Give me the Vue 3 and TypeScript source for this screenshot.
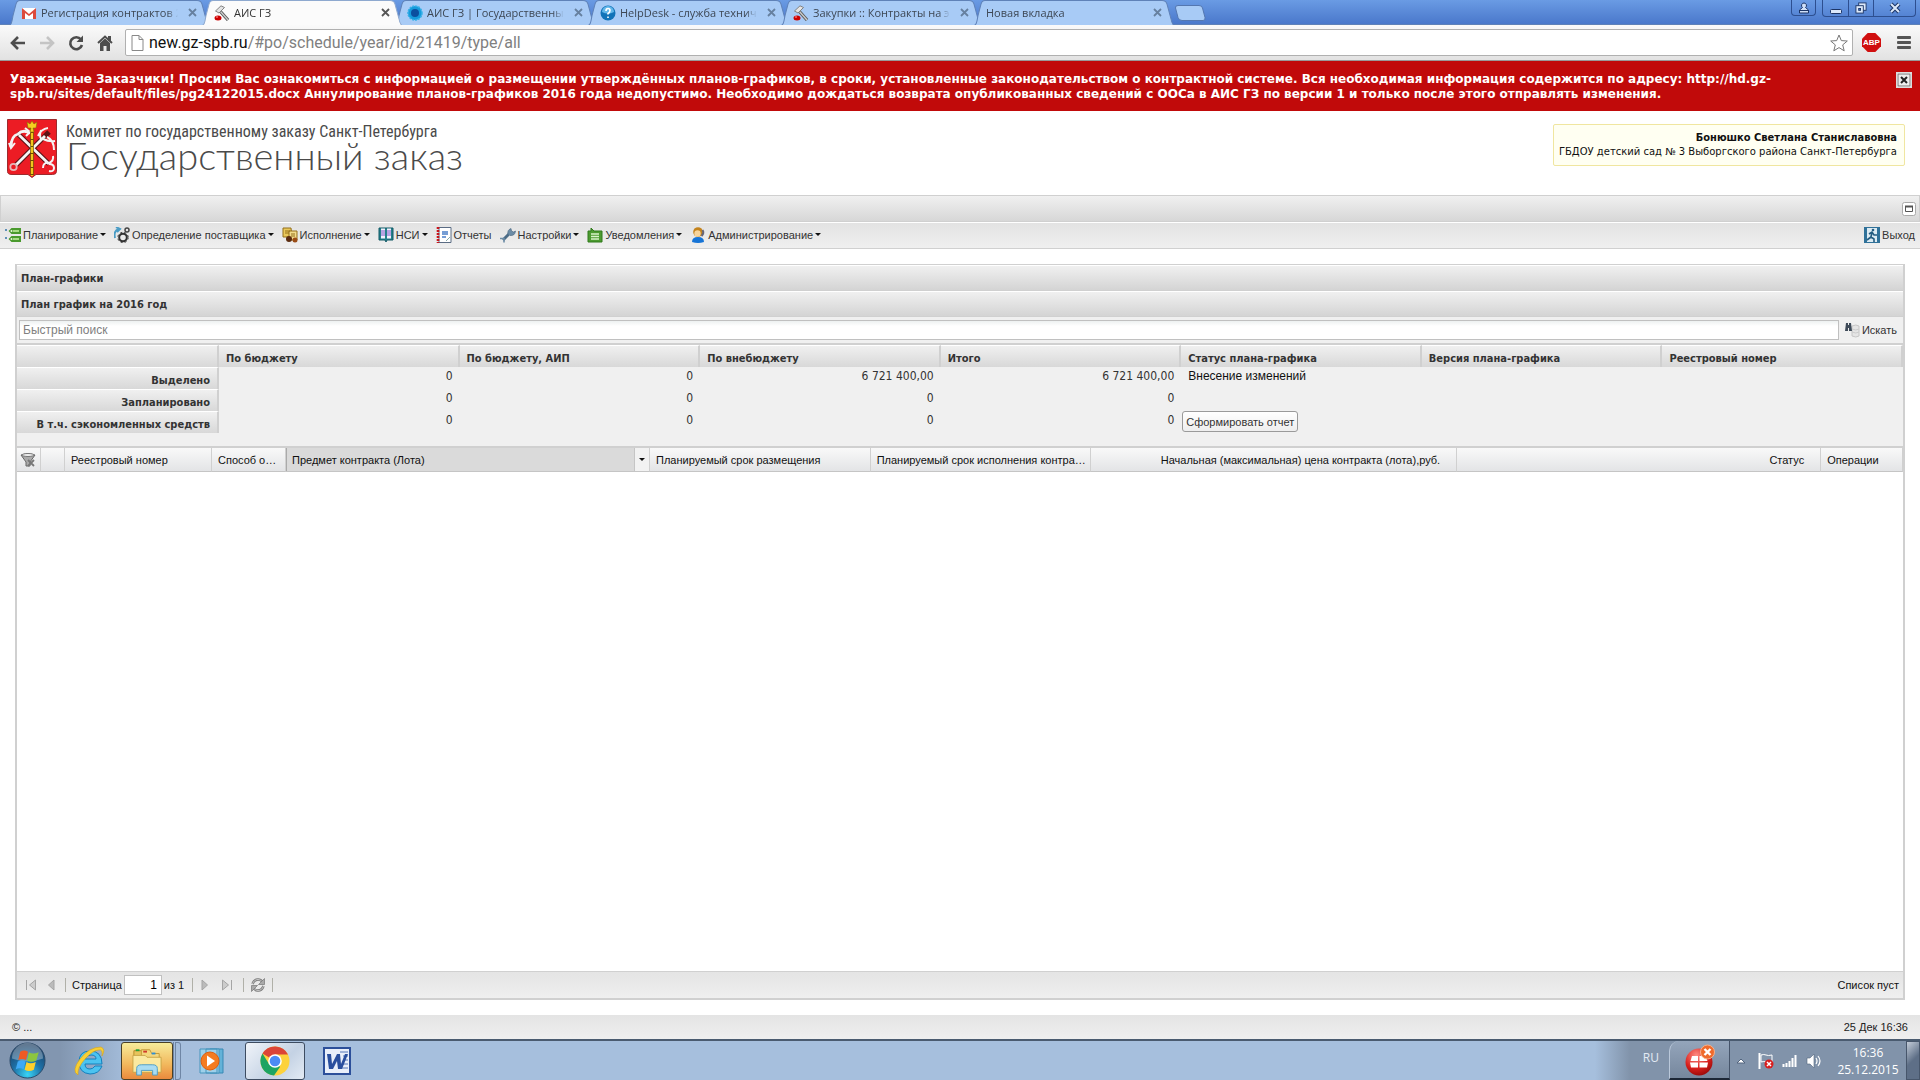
<script setup lang="ts">
import { ref } from 'vue'

interface Tab { title: string; icon: string; active?: boolean }
interface MenuItem { label: string; icon: string; arrow: boolean }
interface Column { label: string; cls: string }

const tabs: Tab[] = [
  { title: 'Регистрация контрактов 2', icon: 'gmail' },
  { title: 'АИС ГЗ', icon: 'gavel', active: true },
  { title: 'АИС ГЗ | Государственны', icon: 'flower' },
  { title: 'HelpDesk - служба технич', icon: 'help' },
  { title: 'Закупки :: Контракты на э', icon: 'gavel' },
  { title: 'Новая вкладка', icon: '' },
]

const menu: MenuItem[] = [
  { label: 'Планирование', icon: 'plan', arrow: true },
  { label: 'Определение поставщика', icon: 'gears', arrow: true },
  { label: 'Исполнение', icon: 'exec', arrow: true },
  { label: 'НСИ', icon: 'book', arrow: true },
  { label: 'Отчеты', icon: 'report', arrow: false },
  { label: 'Настройки', icon: 'wrench', arrow: true },
  { label: 'Уведомления', icon: 'notice', arrow: true },
  { label: 'Администрирование', icon: 'admin', arrow: true },
]

const summaryHeads = ['По бюджету', 'По бюджету, АИП', 'По внебюджету', 'Итого', 'Статус плана-графика', 'Версия плана-графика', 'Реестровый номер']
const summaryRows = [
  { label: 'Выделено', values: ['0', '0', '6 721 400,00', '6 721 400,00'] },
  { label: 'Запланировано', values: ['0', '0', '0', '0'] },
  { label: 'В т.ч. сэкономленных средств', values: ['0', '0', '0', '0'] },
]

const columns: Column[] = [
  { label: '', cls: 'c-filter' },
  { label: '', cls: 'c-blank' },
  { label: 'Реестровый номер', cls: 'c-reg' },
  { label: 'Способ определения', cls: 'c-way' },
  { label: 'Предмет контракта (Лота)', cls: 'c-subject' },
  { label: 'Планируемый срок размещения', cls: 'c-term' },
  { label: 'Планируемый срок исполнения контракта', cls: 'c-term' },
  { label: 'Начальная (максимальная) цена контракта (лота),руб.', cls: 'c-price' },
  { label: 'Статус', cls: 'c-status' },
  { label: 'Операции', cls: 'c-ops' },
]

const address = ref('new.gz-spb.ru/#po/schedule/year/id/21419/type/all')
const query = ref('')
const page = ref('1')
const bannerOpen = ref(true)
</script>

<template>
  <div class="screen">
    <header class="tabbar">
      <ul class="tabs">
        <li v-for="tab in tabs" :key="tab.title" class="tab" :class="{ active: tab.active }">
          <svg class="tab-shape" viewBox="0 0 202 24" preserveAspectRatio="none" aria-hidden="true">
            <path d="M0 25 C4 24 4 20 5 15 L8 4 Q9 .5 12 .5 H189 Q193 .5 194 4 L198 18 Q199 24 202 25 Z" :fill="tab.active ? '#fbfbfb' : '#a8cbf6'" :stroke="tab.active ? '#8ea9cf' : '#5f82b8'" />
          </svg>
          <svg v-if="tab.icon === 'gmail'" class="fav" viewBox="0 0 16 16"><path d="M1 3h14v11H1z" fill="#fff" /><path d="M1 14V3l7 6 7-6v11h-3V8l-4 3-4-3v6z" fill="#dc4a3d" /></svg>
          <svg v-else-if="tab.icon === 'gavel'" class="fav" viewBox="0 0 16 16"><path d="M6 6l8 9" stroke="#555" stroke-width="3.200" /><path d="M6 6l8 9" stroke="#ccc" stroke-width="1.400" /><path d="M1.500 6L7 .8l3.500 1.700L5 8z" fill="#e4e4e4" stroke="#777" stroke-width=".9" /><ellipse cx="4" cy="13" rx="3.500" ry="2.500" fill="#c00" /><ellipse cx="3" cy="12" rx="1.200" ry=".7" fill="#f88" /></svg>
          <svg v-else-if="tab.icon === 'flower'" class="fav" viewBox="0 0 16 16"><circle cx="8" cy="8" r="7" fill="#159bdc" stroke="#34b0e8" stroke-width="1.500" stroke-dasharray="2 1" /><circle cx="8" cy="8" r="4" fill="#0b4f9f" /></svg>
          <svg v-else-if="tab.icon === 'help'" class="fav" viewBox="0 0 16 16"><circle cx="8" cy="8" r="7.500" fill="#1173b8" /><path d="M2 7a6 6 0 0 1 12 0q-6 3-12 0z" fill="#62b7ea" /><path d="M6 6q0-2.500 2-2.500t2 2-2 3v1M8 11.500v1.500" fill="none" stroke="#fff" stroke-width="1.600" /></svg>
          <span class="tab-title">{{ tab.title }}</span>
          <button class="tab-close" aria-label="Закрыть вкладку"><svg viewBox="0 0 9 9"><path d="M1 1l7 7M8 1l-7 7" stroke="currentColor" stroke-width="1.800" /></svg></button>
        </li>
      </ul>
      <button class="new-tab" aria-label="Новая вкладка"><svg viewBox="0 0 32 16"><path d="M1.500 3Q1 .5 4 .5H25q3 0 3.500 2.500l2.500 9.500q.5 3-2 3H8q-3 0-4-3z" fill="#a8cbf6" stroke="#5477b0" /></svg></button>
      <div class="win">
        <button class="win-user" aria-label="Профиль"><svg viewBox="0 0 12 12"><path d="M6 1a2.500 2.500 0 0 1 1.500 4.500L10.500 8v3h-9V8l3-2.500A2.500 2.500 0 0 1 6 1z" fill="#cfe0f8" stroke="#1c3566" /><path d="M1.500 8.500h9" stroke="#1c3566" /></svg></button>
        <div class="win-group">
          <button aria-label="Свернуть"><svg viewBox="0 0 12 12"><rect x=".5" y="7.500" width="11" height="4" rx="1" fill="#dbe8fa" stroke="#1c3566" /></svg></button>
          <button aria-label="Восстановить"><svg viewBox="0 0 13 13"><rect x="4" y="1" width="8" height="8" fill="#dbe8fa" stroke="#1c3566" /><rect x="1" y="4" width="8" height="8" fill="#dbe8fa" stroke="#1c3566" /><rect x="4" y="7" width="2" height="2" fill="#4a78cb" stroke="#1c3566" /></svg></button>
          <button class="wide" aria-label="Закрыть"><svg viewBox="0 0 12 12"><path d="M2 2l8 8M10 2l-8 8" stroke="#1c3566" stroke-width="4" /><path d="M2 2l8 8M10 2l-8 8" stroke="#dbe8fa" stroke-width="2" /></svg></button>
        </div>
      </div>
    </header>

    <nav class="toolbar">
      <button aria-label="Назад"><svg viewBox="0 0 18 18"><path d="M16 9H4M9 3L3 9l6 6" fill="none" stroke="#4d4d4d" stroke-width="2.600" /></svg></button>
      <button aria-label="Вперед"><svg viewBox="0 0 18 18"><path d="M2 9h12M9 3l6 6-6 6" fill="none" stroke="#c4c4c4" stroke-width="2.600" /></svg></button>
      <button aria-label="Обновить"><svg viewBox="0 0 18 18"><path d="M14 5.500A6 6 0 1 0 15 11" fill="none" stroke="#4d4d4d" stroke-width="2.600" /><path d="M16 1.500V8H9.500z" fill="#4d4d4d" /></svg></button>
      <button aria-label="Домой"><svg viewBox="0 0 18 18"><path d="M2 9l7-6.500L16 9" fill="none" stroke="#4d4d4d" stroke-width="2" /><path d="M12 2h3v5h-3zM4 9l5-4.500L14 9v8h-3.500v-5h-3v5H4z" fill="#4d4d4d" /></svg></button>
      <div class="omnibox">
        <svg class="doc" viewBox="0 0 13 16"><path d="M1 .5h7l4 4v11H1z" fill="#fff" stroke="#888" /><path d="M8 .5v4h4" fill="none" stroke="#888" /></svg>
        <a class="url" :href="'#po'" :title="address"><span>new.gz-spb.ru</span>/#po/schedule/year/id/21419/type/all</a>
        <svg class="star" viewBox="0 0 18 18"><path d="M9 1l2.300 5.600 6 .4-4.600 3.900 1.500 5.900L9 13.600l-5.200 3.200 1.500-5.900L.7 7l6-.4z" fill="#fff" stroke="#777" /></svg>
      </div>
      <span class="abp"><svg viewBox="0 0 20 20"><path d="M6 0h8l6 6v8l-6 6H6l-6-6V6z" fill="#d00f0f" /></svg><b>ABP</b></span>
      <button class="burger" aria-label="Меню"><i></i><i></i><i></i></button>
    </nav>

    <section v-if="bannerOpen" class="banner">
      <p>Уважаемые Заказчики! Просим Вас ознакомиться с информацией о размещении утверждённых планов-графиков, в сроки, установленные законодательством о контрактной системе. Вся необходимая информация содержится по адресу: http://hd.gz-spb.ru/sites/default/files/pg24122015.docx Аннулирование планов-графиков 2016 года недопустимо. Необходимо дождаться возврата опубликованных сведений с ООСа в АИС ГЗ по версии 1 и только после этого отправлять изменения.</p>
      <button aria-label="Закрыть" @click="bannerOpen = false"><svg viewBox="0 0 16 16"><rect x=".5" y=".5" width="15" height="15" fill="#fff" stroke="#ddd" /><rect x="2" y="2" width="12" height="12" fill="#eee" stroke="#777" /><path d="M5 5l6 6M11 5l-6 6" stroke="#222" stroke-width="2" /></svg></button>
    </section>

    <section class="brand">
      <svg class="arms" viewBox="0 0 50 59" aria-hidden="true">
        <path d="M.5.5h49v52q0 3-4 3H29l-4 3-4-3H5q-4.500 0-4.500-3z" fill="#ec1c24" stroke="#9c2b2e" />
        <g fill="none" stroke="#5d1115" stroke-width="5"><path d="M9 46L42 13M10 14L42 45" /></g>
        <g fill="none" stroke="#f4f4f4" stroke-width="2.800">
          <path d="M9 46L38 17M12 16L42 45" /><circle cx="6.500" cy="48" r="3.200" stroke-width="1.800" stroke="#e5b7b7" />
          <path d="M4 28Q4 17 11 15Q16 10 23 14" /><path d="M2 24l2 5 4-5M18 9l5 4-4 4" stroke-width="2" />
          <path d="M31 17Q34 10 41 9M40 18Q47 21 47 31M34 20q-2-4 0-9M36 20q6 3 12 2" stroke-width="2" />
          <path d="M36 49q0-6 6-5 5-2 4-7M42 45q5 0 5 4t-5 3" stroke-width="2" />
        </g>
        <path d="M25 7v49" stroke="#6b5200" stroke-width="3.500" /><path d="M25 7v50" stroke="#f0c81c" stroke-width="2.200" stroke-dasharray="6 1" />
        <path d="M20 3l3 2 2-3 2 3 3-2-1 6h-3l1 4h-4l1-4h-3z" fill="#f5cf20" stroke="#8b6b00" stroke-width=".6" />
      </svg>
      <div class="brand-text">
        <p class="committee">Комитет по государственному заказу Санкт-Петербурга</p>
        <h1>Государственный заказ</h1>
      </div>
      <div class="user">
        <strong>Бонюшко Светлана Станиславовна</strong>
        <span>ГБДОУ детский сад № 3 Выборгского района Санкт-Петербурга</span>
      </div>
    </section>

    <div class="titlebar">
      <button aria-label="Развернуть"><svg viewBox="0 0 14 14"><rect x=".5" y=".5" width="13" height="13" rx="2" fill="#fff" stroke="#aaa" /><path d="M3.500 4.500h7v5h-7z" fill="none" stroke="#555" /><path d="M3 4.500h8" stroke="#555" stroke-width="2" /></svg></button>
    </div>

    <nav class="menubar">
      <button v-for="item in menu" :key="item.label">
        <svg viewBox="0 0 16 16" aria-hidden="true">
          <g v-if="item.icon === 'plan'"><path d="M6.500 1H16v6H6.500L3.500 4zM6.500 9H16v6H6.500l-3-3z" fill="#4a9a2e" /><path d="M8 4h6M8 12h6" stroke="#a6dc84" stroke-width="2" /><circle cx="6.500" cy="4" r="1" fill="#e8f8dd" /><circle cx="6.500" cy="12" r="1" fill="#e8f8dd" /><path d="M0 3h2M0 11h2" stroke="#3273a8" stroke-width="1.500" /></g>
          <g v-else-if="item.icon === 'gears'"><circle cx="9" cy="10.500" r="3.800" fill="none" stroke="#333" stroke-width="2" /><circle cx="9" cy="10.500" r="5.200" fill="none" stroke="#333" stroke-dasharray="2 2.200" /><circle cx="13" cy="3" r="2" fill="none" stroke="#444" stroke-width="1.500" /><path d="M1 11Q-1 4 5 2M2 0l4 2-3 3" fill="none" stroke="#4a9cc5" stroke-width="2" /></g>
          <g v-else-if="item.icon === 'exec'"><path d="M1 1h8l1 9H1z" fill="#e9c85a" stroke="#936f1b" /><path d="M7 4h8v9H7z" fill="#f2dc8c" stroke="#936f1b" /><path d="M3 4h5M3 6h4M9 7h4M9 9h4" stroke="#936f1b" /><circle cx="7" cy="12" r="3" fill="#5a2b0f" /><circle cx="13" cy="13" r="2.500" fill="#9a4c16" /></g>
          <g v-else-if="item.icon === 'book'"><path d="M1 1h14v12H9l-1 2-1-2H1z" fill="#23808c" stroke="#125a66" /><path d="M3 1.500h4v10H3zM9 1.500h4v10H9z" fill="#f3f0fc" /><path d="M3 4h4M3 6h4M3 8h4M9 4h4M9 6h4M9 8h4" stroke="#7b55c7" /></g>
          <g v-else-if="item.icon === 'report'"><path d="M3 .5h12v15H3z" fill="#fff" stroke="#5b6c84" /><path d="M2 0v16" stroke="#c8161d" stroke-width="2.600" stroke-dasharray="2 1" /><path d="M6 5h6M6 7h6M6 10h4" stroke="#4a7fc7" stroke-width="1.400" /><path d="M10 14l4-4" stroke="#8aa" /></g>
          <g v-else-if="item.icon === 'wrench'"><path d="M3 13l7-7" stroke="#4b6b86" stroke-width="3" /><path d="M8 7Q7 3 11 1.500L11.500 4l2 1L15.500 4Q15 9 10 8.500" fill="#6c8ca6" stroke="#45617a" stroke-width=".6" /><path d="M0 11.500h4v4" stroke="#6c8ca6" stroke-width="1.600" fill="none" /></g>
          <g v-else-if="item.icon === 'notice'"><path d="M1 4h3V1l3 3h8v11H1z" fill="#4c9a30" stroke="#2f7a1a" /><path d="M4 7h8M4 9.500h8M4 12h8" stroke="#d8f2c8" stroke-width="1.300" /></g>
          <g v-else><path d="M2 15q0-5 6-5t6 5q-6 2-12 0z" fill="#1674d6" /><circle cx="8" cy="5" r="4.800" fill="#c4831c" /><circle cx="7.500" cy="6.500" r="3.200" fill="#f7d49b" /><path d="M12.500 3q2 3-1 6" stroke="#667" stroke-width="2" fill="none" /></g>
        </svg>
        <span>{{ item.label }}</span><i v-if="item.arrow" class="caret"></i>
      </button>
      <button class="exit"><svg viewBox="0 0 16 16" aria-hidden="true"><path d="M0 0h16v16H0z" fill="#2f7199" /><path d="M3 1h10v14H3z" fill="#dcebf3" /><circle cx="9" cy="3" r="1.300" fill="#245c80" /><path d="M5 7l3-2 2 3h3M8 5L7 10l3 2v3M7 10l-4 3" fill="none" stroke="#245c80" stroke-width="1.600" /></svg><span>Выход</span></button>
    </nav>

    <main class="main">
      <section class="panel">
        <h2>План-графики</h2>
        <h3>План график на 2016 год</h3>
        <form class="search" @submit.prevent>
          <input v-model="query" type="text" aria-label="Быстрый поиск" placeholder="Быстрый поиск" />
          <button type="submit"><svg viewBox="0 0 16 16" aria-hidden="true"><path d="M8 4q4-2 7 0v10q-3 2-7 0z" fill="#e5e5e5" stroke="#c6c6c6" /><path d="M8 7q4 2 7 0M8 10q4 2 7 0" fill="none" stroke="#ccc" /><path d="M2 1h2v2h1V1h2l1 8H5V6H4v3H1z" fill="#3e4a58" /></svg>Искать</button>
        </form>

        <div class="summary">
          <table>
            <colgroup><col class="label-col" /><col v-for="h in summaryHeads" :key="h" /></colgroup>
            <thead><tr><td class="corner"></td><th v-for="h in summaryHeads" :key="h" scope="col">{{ h }}</th></tr></thead>
            <tbody>
              <tr v-for="(row, i) in summaryRows" :key="row.label">
                <th scope="row">{{ row.label }}</th>
                <td v-for="(v, n) in row.values" :key="n" class="num">{{ v }}</td>
                <td class="state"><template v-if="i === 0">Внесение изменений</template><button v-if="i === 2" type="button">Сформировать отчет</button></td>
                <td></td><td></td>
              </tr>
            </tbody>
          </table>
        </div>

        <div class="grid">
          <table>
            <thead><tr>
              <th v-for="c in columns" :key="c.label + c.cls" :class="c.cls" scope="col">
                <svg v-if="c.cls === 'c-filter'" viewBox="0 0 16 16"><path d="M1 3q7-3 14 0l-5 7v4H6v-4z" fill="#aaa" stroke="#666" /><ellipse cx="8" cy="3" rx="6" ry="1.500" fill="#eee" stroke="#777" /><path d="M8 8l6 6M14 8l-6 6" stroke="#777" stroke-width="1.800" /></svg>
                <div v-else-if="c.cls === 'c-subject'" class="subject"><span>{{ c.label }}</span><button aria-label="Меню столбца"><i class="caret"></i></button></div>
                <template v-else>{{ c.label }}</template>
              </th>
            </tr></thead>
          </table>
        </div>

        <div class="pager">
          <button class="back" aria-label="Первая"><svg viewBox="0 0 12 12"><path d="M1.500 1v10M10.500 1v10L4.500 6z" fill="#ccc" stroke="#a5a5a5" /></svg></button>
          <button class="back" aria-label="Предыдущая"><svg viewBox="0 0 12 12"><path d="M9 1v10L3.500 6z" fill="#bbb" stroke="#a5a5a5" /></svg></button>
          <i class="sep"></i>
          <label for="page">Страница</label><input id="page" v-model="page" type="text" /><span class="of">из 1</span>
          <i class="sep"></i>
          <button aria-label="Следующая"><svg viewBox="0 0 12 12"><path d="M3 1v10l5.500-5z" fill="#bbb" stroke="#a5a5a5" /></svg></button>
          <button aria-label="Последняя"><svg viewBox="0 0 12 12"><path d="M10.500 1v10M1.500 1v10l6-5z" fill="#ccc" stroke="#a5a5a5" /></svg></button>
          <i class="sep"></i>
          <button class="reload" aria-label="Обновить"><svg viewBox="0 0 16 16"><path d="M2.500 7Q4 2.500 8 2.500q3 0 4.500 2.500M13.500 9q-1.500 4.500-5.500 4.500-3 0-4.500-2.500" fill="none" stroke="#777" stroke-width="2.400" /><path d="M2.500 7Q4 2.500 8 2.500q3 0 4.500 2.500M13.500 9q-1.500 4.500-5.500 4.500-3 0-4.500-2.500" fill="none" stroke="#ddd" stroke-width=".8" /><path d="M14.500 1.500v6h-6zM1.500 14.500v-6h6z" fill="#aaa" stroke="#777" stroke-width=".7" /></svg></button>
          <i class="sep"></i>
          <span class="empty">Список пуст</span>
        </div>
      </section>
    </main>

    <footer class="status"><span>© ...</span><time>25 Дек 16:36</time></footer>

    <footer class="taskbar">
      <button class="start" aria-label="Пуск"><svg viewBox="0 0 38 38">
        <defs><radialGradient id="orb" cx="50%" cy="90%" r="85%"><stop offset="0" stop-color="#39d4f5" /><stop offset=".5" stop-color="#1d6fa5" /><stop offset="1" stop-color="#1d3f63" /></radialGradient></defs>
        <circle cx="19" cy="19" r="18" fill="url(#orb)" stroke="#2b4a69" /><path d="M3 17a16 16 0 0 1 32 0q-16 6-32 0z" fill="#fff" opacity=".3" />
        <path d="M11.500 10q4-2.500 8 0l-2 8.500q-4-2-8 0z" fill="#ee5a24" /><path d="M20.500 10.500q4 2.500 10 0l-2.500 8.500q-5 2.500-9.500 0z" fill="#8cc63f" /><path d="M9 20q4-2 8 0l-2 8q-4-2-8 0z" fill="#3fa9f5" /><path d="M18 20.500q4 2.500 9.500 0l-2 8q-5 2.500-9.500 0z" fill="#ffd02b" />
      </svg></button>
      <button class="ie" aria-label="Internet Explorer"><svg viewBox="0 0 32 32"><path d="M29 21q-3 8-12 8Q6 28 6 17T17 6q12 0 12 13H12q0 5 5 5 3 0 5-3zM12 14h11q0-4-5-4t-6 4z" fill="#4cc3f0" stroke="#1480bd" /><path d="M5 30q-7-4 2-16T28 2q5 2 1 9 1-7-3-6-6 0-14 9T5 30z" fill="#f7cf35" stroke="#d9a514" stroke-width=".6" /></svg></button>
      <button class="folder" aria-label="Проводник"><svg viewBox="0 0 36 32"><path d="M4 5h8l2 3h16v18H4z" fill="#e8c45c" stroke="#b78b2b" /><path d="M12 4h9l2 4h8v19H12z" fill="#f4d77d" stroke="#c29b38" /><path d="M3 10h13l2 2h15v16H3z" fill="#fbe9a0" stroke="#c9a446" /><path d="M6 4.500h4" stroke="#25a33a" stroke-width="2" /><path d="M14 6h4" stroke="#d03a2b" stroke-width="2" /><path d="M23 8h4" stroke="#2d8fd6" stroke-width="2" /><path d="M7 31v-7q0-4 5-4h12q5 0 5 4v7h-5v-5H12v5z" fill="#a9dcf2" stroke="#4d9cc2" /></svg></button>
      <i class="stack"></i>
      <button class="media" aria-label="Проигрыватель"><svg viewBox="0 0 30 28"><path d="M12 2h13v24H12z" fill="#63b2d8" stroke="#3889b5" /><path d="M8 2h13v24H8zM2 2h17v24H2z" fill="#9dd0ea" stroke="#4795bd" /><circle cx="12" cy="14" r="9" fill="#f47b20" stroke="#e05e0c" /><path d="M9 8.500v11l8-5.500z" fill="#fff" /></svg></button>
      <button class="chrome" aria-label="Google Chrome"><svg viewBox="0 0 30 30"><circle cx="15" cy="15" r="14.500" fill="#fdd23c" /><path d="M15 15L2.500 7.500A14.500 14.500 0 0 1 28 8.500H15z" fill="#db4437" /><path d="M15 15l5 6-6 8.500A14.500 14.500 0 0 1 2.500 7.500L9 18z" fill="#1da462" /><circle cx="15" cy="15" r="6.800" fill="#fff" /><circle cx="15" cy="15" r="5.300" fill="#4c8bf5" /></svg></button>
      <button class="word" aria-label="Microsoft Word"><svg viewBox="0 0 28 28"><path d="M1 1h26v26H1z" fill="#e9effa" stroke="#2c4f9a" stroke-width="2" /><path d="M17 5h8M20 9h5M20 13h5M20 17h5M18 21h7" stroke="#5577b8" /><path d="M4 7h4l1 10 5-10h3l1 10 4-10h3l-6 15h-4l-1-8-4 8H6z" fill="#2a4f9e" /></svg></button>
      <div class="tray">
        <span class="lang">RU</span>
        <button class="alert" aria-label="Уведомление"><svg viewBox="0 0 32 32"><defs><radialGradient id="ball" cx="40%" cy="25%" r="80%"><stop offset="0" stop-color="#ff8c83" /><stop offset=".6" stop-color="#d9201c" /><stop offset="1" stop-color="#960808" /></radialGradient></defs><circle cx="15" cy="18" r="13.500" fill="url(#ball)" /><path d="M8 12h6v5H6.500zM15.500 12h6l2 5h-8zM6 18.500h8v5H7zM15.500 18.500h8.500l-1 5h-7.500z" fill="#fff" /><circle cx="23.500" cy="8" r="7" fill="#ef6a2c" stroke="#f7b08a" /><path d="M20.500 5l6 6M26.500 5l-6 6" stroke="#fff" stroke-width="2.400" /></svg></button>
        <svg class="up" viewBox="0 0 10 6"><path d="M1 5l4-4 4 4z" fill="#fff" stroke="#52657e" /></svg>
        <svg class="t16" viewBox="0 0 16 16"><path d="M1.500 0v16" stroke="#fff" stroke-width="2" /><path d="M3 2q3-1 5 0t6 0v7q-4 1-6 0t-5 0z" fill="#8193aa" stroke="#fff" /><circle cx="11" cy="11" r="4.500" fill="#d81e1e" /><path d="M9 9l4 4M13 9l-4 4" stroke="#fff" stroke-width="1.500" /></svg>
        <svg class="t16" viewBox="0 0 16 16"><path d="M1.500 11v3M4.500 10v4M7.500 8v6M10.500 5v9M13.500 2v12" stroke="#fff" stroke-width="2" /></svg>
        <svg class="t16" viewBox="0 0 16 16"><path d="M1 5h3l4-4v14l-4-4H1z" fill="#fff" stroke="#52657e" stroke-width=".6" /><path d="M10 5q2 3 0 6M12 3q4 5 0 10" fill="none" stroke="#fff" stroke-width="1.200" /></svg>
        <div class="clock"><span>16:36</span><span>25.12.2015</span></div>
        <button class="desk" aria-label="Показать рабочий стол"></button>
      </div>
    </footer>
  </div>
</template>

<style>
body { margin: 0; background: #fff; }
</style>

<style scoped>
* { box-sizing: border-box; }
.screen { min-height: 100vh; display: flex; flex-direction: column; font: 11px/14px "Liberation Sans", sans-serif; color: #222; background: #fff; }
button { border: 0; padding: 0; margin: 0; background: none; font: inherit; color: inherit; display: flex; align-items: center; justify-content: center; }
svg { display: block; flex: none; }
h1, h2, h3, p, ul { margin: 0; padding: 0; }

.tabbar { height: 25px; display: flex; background: linear-gradient(#6a9be4, #4a78cb); border-bottom: 1px solid #5f82b8; }
.tabs { display: flex; list-style: none; padding-left: 8px; min-width: 0; }
.tab { position: relative; width: 202px; margin-right: -9px; height: 25px; display: flex; align-items: center; padding: 0 13px; min-width: 0; }
.tab.active { z-index: 1; }
.tab-shape { position: absolute; left: 0; top: 0; width: 100%; height: 25px; }
.fav { position: relative; width: 16px; height: 16px; margin-right: 4px; }
.tab-title { position: relative; flex: 1; font: 11px/16px "Open Sans", sans-serif; color: #3d4754; white-space: nowrap; overflow: hidden; mask-image: linear-gradient(90deg, #000 92%, transparent); }
.active .tab-title { color: #333; }
.tab-close { position: relative; width: 9px; height: 25px; margin-left: 10px; color: #66809f; }
.active .tab-close { color: #555; }
.tab-close svg { width: 9px; height: 9px; }
.new-tab { width: 32px; height: 25px; margin-left: 8px; }
.new-tab svg { width: 32px; height: 16px; }
.win { margin-left: auto; display: flex; gap: 6px; padding-right: 4px; height: 17px; }
.win button { width: 25px; height: 16px; }
.win .wide { width: 42px; }
.win svg { width: 12px; height: 12px; }
.win-user, .win-group { border: 1px solid #2d4f90; border-top: 0; border-radius: 0 0 4px 4px; }
.win-group { display: flex; }
.win-group button + button { border-left: 1px solid #2d4f90; }

.toolbar { height: 36px; display: flex; align-items: center; padding: 0 9px; background: linear-gradient(#fafafa, #e2e2e2); border-bottom: 1px solid #9a9a9a; }
.toolbar > button { width: 18px; height: 18px; margin-right: 11px; }
.toolbar > button svg { width: 18px; height: 18px; }
.omnibox { flex: 1; height: 27px; display: flex; align-items: center; padding: 0 4px 0 5px; background: #fff; border: 1px solid #b0b0b0; border-radius: 2px; }
.doc { width: 13px; height: 16px; }
.url { flex: 1; margin-left: 5px; font: 16px/20px Roboto, sans-serif; color: #808080; text-decoration: none; }
.url span { color: #111; }
.star { width: 18px; height: 18px; }
.abp { position: relative; width: 19px; height: 19px; margin: 0 16px 0 9px; display: flex; align-items: center; justify-content: center; }
.abp svg { position: absolute; left: 0; top: 0; width: 19px; height: 19px; }
.abp b { position: relative; font: bold 8px/10px "Liberation Sans", sans-serif; color: #fff; }
.toolbar > .burger { width: 14px; margin-right: 0; flex-direction: column; gap: 2px; }
.burger i { width: 14px; height: 3px; background: #555; border-radius: 1px; }

.banner { background: #c10a0a; display: flex; justify-content: space-between; padding: 11px 8px 9px 10px; min-height: 50px; }
.banner p { font: bold 12px/15px "DejaVu Sans", sans-serif; color: #fff; padding-right: 60px; }
.banner button { width: 16px; height: 16px; flex: none; }
.banner svg { width: 16px; height: 16px; }

.brand { height: 84px; display: flex; align-items: flex-start; padding: 8px 15px 0 7px; }
.arms { width: 50px; height: 59px; }
.brand-text { margin-left: 9px; color: #4a4a4a; }
.committee { font: 16px/18px "Roboto Condensed", "Open Sans Condensed", Roboto, sans-serif; padding-top: 4px; }
h1 { font: 300 38px/28px Lato, sans-serif; }
.user { margin: 5px 0 0 auto; border: 1px solid #f0e6a0; border-radius: 2px; background: #fffff2; padding: 6px 7px 6px 5px; height: 42px; display: flex; flex-direction: column; align-items: flex-end; font: 10px/14px "DejaVu Sans", sans-serif; color: #111; }
.user strong { font: bold 11px/14px "DejaVu Sans Condensed", sans-serif; }

.titlebar { height: 27px; border: 1px solid #d0d0d0; background: linear-gradient(#f0f0f0, #d7d7d7); display: flex; justify-content: flex-end; align-items: center; padding-right: 3px; }
.titlebar svg { width: 14px; height: 14px; }
.menubar { height: 27px; display: flex; align-items: center; padding: 0 5px 2px; gap: 8px; background: linear-gradient(#e3e3e3, #efefef); border-bottom: 1px solid #d0d0d0; border-top: 1px solid #fff; color: #333; }
.menubar button { gap: 2px; }
.menubar svg { width: 16px; height: 16px; }
.caret { width: 0; height: 0; border: 3px solid transparent; border-top-color: #111; border-bottom: 0; }
.menubar .exit { margin-left: auto; }

.main { flex: 1; display: flex; padding: 15px; }
.panel { flex: 1; min-width: 0; display: flex; flex-direction: column; border: 2px solid #d0d0d0; border-top-width: 1px; }
h2, h3 { height: 26px; background: linear-gradient(#f0f0f0, #d4d4d4); border-top: 1px solid #fff; border-bottom: 1px solid #d0d0d0; font: bold 11px/25px "DejaVu Sans Condensed", sans-serif; color: #333; padding-left: 4px; }
.search { height: 26px; display: flex; align-items: center; gap: 5px; padding: 1px 6px 2px 2px; background: #f0f0f0; }
.search input { flex: 1; height: 20px; border: 1px solid #c0c0c0; background: linear-gradient(#edf1f1, #fff 5px); font: 12px/16px "Liberation Sans", sans-serif; padding: 0 3px; }
.search input::placeholder { color: #808080; opacity: 1; }
.search button { gap: 2px; color: #333; }
.search svg { width: 16px; height: 16px; }

.summary { height: 105px; border-top: 2px solid #d0d0d0; border-bottom: 2px solid #d0d0d0; background: #f0f0f0; }
.summary table, .grid table { width: 100%; table-layout: fixed; border-collapse: separate; border-spacing: 0; }
.label-col { width: 202px; }
.summary th, .summary td { height: 22px; padding: 0 7px; }
.summary th, .corner { border-top: 1px solid #fff; border-right: 2px solid #d0d0d0; background: linear-gradient(#f0f0f0, #d8d8d8); font: bold 11px/16px "DejaVu Sans Condensed", sans-serif; color: #333; text-align: left; vertical-align: bottom; }
.summary th[scope="row"] { text-align: right; }
.summary td { font: 12px/18px "DejaVu Sans Condensed", sans-serif; vertical-align: top; }
.summary td.num { text-align: right; color: #333; }
.summary td.state { font: 12px/18px "Liberation Sans", sans-serif; color: #111; }
.state button { height: 21px; margin-left: -6px; padding: 0 3px; border: 1px solid #9a9a9a; border-radius: 3px; background: linear-gradient(#fff, #eee); font-size: 11px; color: #333; }

.grid { flex: 1; border-bottom: 1px solid #d0d0d0; }
.grid th { height: 24px; padding: 0 4px 0 6px; font: 11px/22px "Liberation Sans", sans-serif; color: #111; text-align: left; white-space: nowrap; overflow: hidden; text-overflow: ellipsis; background: linear-gradient(#f9f9f9, #e3e4e6); border-right: 1px solid #d0d0d0; border-bottom: 1px solid #c5c5c5; }
.grid th svg { width: 16px; height: 16px; }
.grid .c-filter { width: 24px; padding: 0 3px; }
.c-blank { width: 24px; }
.c-reg { width: 147px; }
.c-way { width: 74px; }
.grid .c-subject { width: 19.3%; padding: 0; background: #dadada; }
.subject { display: flex; justify-content: space-between; align-items: center; padding-left: 5px; border-left: 1px solid #aaa; }
.subject button { width: 15px; height: 23px; background: #f2f2f2; border-left: 1px solid #c5c5c5; }
.c-term { width: 11.7%; }
.grid .c-price { width: 19.4%; text-align: right; padding-right: 16px; }
.grid .c-status { width: 19.3%; text-align: right; padding-right: 16px; }

.pager { height: 26px; display: flex; align-items: center; padding: 0 4px 0 8px; background: linear-gradient(#e4e4e4, #efefef); color: #111; }
.pager button { width: 12px; height: 16px; margin-right: 10px; }
.pager .back { margin-right: 8px; }
.pager button svg { width: 12px; height: 12px; }
.pager .reload { width: 16px; margin-right: 6px; }
.pager .reload svg { width: 16px; height: 16px; }
.sep { width: 1px; height: 14px; background: #b0b0a8; margin-right: 6px; }
.pager input { width: 38px; height: 20px; margin: 0 2px; border: 1px solid #c0c0c0; background: #fff; font: 12px/16px "Liberation Sans", sans-serif; text-align: right; padding: 0 4px; }
.of { margin-right: 8px; }
.empty { margin-left: auto; }

.status { height: 24px; display: flex; justify-content: space-between; align-items: center; padding: 0 12px; background: linear-gradient(#e4e4e4, #efefef); color: #222; }

.taskbar { height: 41px; display: flex; align-items: center; border-top: 2px solid #4a5b70; background: linear-gradient(90deg, #8296b0, #8296b0 60px, #a6bfdd 130px, #a6bfdd calc(100% - 325px), #8193aa calc(100% - 290px)); }
.taskbar button { height: 38px; flex: none; }
.start { margin-left: 8px; width: 38px; }
.start svg { width: 37px; height: 37px; }
.ie { margin-left: 27px; width: 32px; }
.ie svg { width: 32px; height: 32px; }
.taskbar .folder { margin-left: 16px; width: 52px; border: 1px solid #4b4126; border-radius: 3px; background: linear-gradient(#f7ec9a, #f2b75c 60%, #e98a3d); }
.folder svg { width: 34px; height: 30px; }
.stack { width: 8px; height: 38px; border: 1px solid #6f86a5; border-left: 3px double #6f86a5; border-radius: 0 3px 3px 0; }
.media { margin-left: 17px; width: 30px; }
.media svg { width: 30px; height: 28px; }
.taskbar .chrome { margin-left: 17px; width: 60px; border: 1px solid #3d4c61; border-radius: 3px; background: linear-gradient(135deg, #f0f4f9, #c4d2e4 60%, #e3ebf4); }
.chrome svg { width: 30px; height: 30px; }
.word { margin-left: 18px; width: 28px; }
.word svg { width: 28px; height: 28px; }
.tray { margin-left: auto; display: flex; align-items: center; height: 39px; color: #fff; }
.lang { font: 12px/16px "Open Sans", sans-serif; margin: 0 10px 6px 0; color: #e3eaf3; }
.tray .alert { width: 61px; height: 39px; background: linear-gradient(#94a5bb, #76879d); border-left: 1px solid #bac8da; border-right: 1px solid #45546a; border-bottom: 2px solid #1d2736; border-radius: 10px 0 0 0; }
.alert svg { width: 32px; height: 32px; }
.up { width: 10px; height: 6px; margin: 0 12px 0 6px; }
.t16 { width: 16px; height: 16px; margin-right: 8px; }
.clock { width: 76px; display: flex; flex-direction: column; align-items: center; font: 12px/17px "Open Sans", sans-serif; }
.tray .desk { width: 14px; height: 39px; border: 1px solid #47566b; background: linear-gradient(135deg, #c3ccd8, #5e6f87 50%); }
</style>
